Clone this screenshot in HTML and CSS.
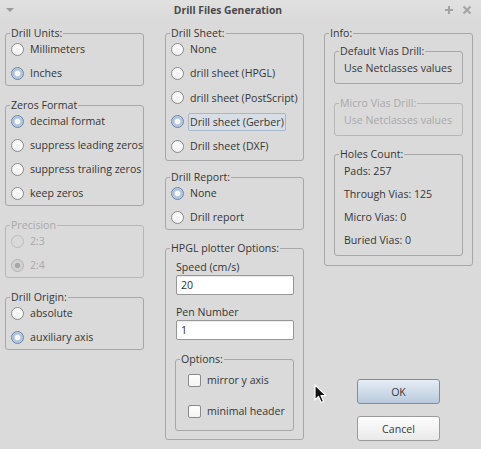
FILE: index.html
```html
<!DOCTYPE html>
<html>
<head>
<meta charset="utf-8">
<link rel="stylesheet" href="styles.css">
</head>
<body>
<div class="window">
  <div class="titlebar">
    <div class="tb-left">
      <svg width="8" height="5" viewBox="0 0 8 5"><polygon points="0,0 8,0 4,4" fill="#9a9a9a"/></svg>
    </div>
    <div class="title">Drill Files Generation</div>
    <div class="tb-right">
      <svg width="10" height="10" viewBox="0 0 10 10"><path d="M5 1v8M1 5h8" stroke="#a3a3a3" stroke-width="2"/></svg>
      <svg width="10" height="10" viewBox="0 0 10 10"><path d="M1.5 1.5l7 7M8.5 1.5l-7 7" stroke="#a3a3a3" stroke-width="2"/></svg>
    </div>
  </div>

  <div class="content">
    <div class="col col1">
      <fieldset class="box">
        <legend>Drill Units:</legend>
        <div class="rows">
          <div class="row"><span class="radio"></span>Millimeters</div>
          <div class="row"><span class="radio on"></span>Inches</div>
        </div>
      </fieldset>
      <fieldset class="box">
        <legend>Zeros Format</legend>
        <div class="rows">
          <div class="row"><span class="radio on"></span>decimal format</div>
          <div class="row"><span class="radio"></span>suppress leading zeros</div>
          <div class="row"><span class="radio"></span>suppress trailing zeros</div>
          <div class="row"><span class="radio"></span>keep zeros</div>
        </div>
      </fieldset>
      <fieldset class="box disabled">
        <legend>Precision</legend>
        <div class="rows">
          <div class="row"><span class="radio off"></span>2:3</div>
          <div class="row"><span class="radio off on"></span>2:4</div>
        </div>
      </fieldset>
      <fieldset class="box">
        <legend>Drill Origin:</legend>
        <div class="rows">
          <div class="row"><span class="radio"></span>absolute</div>
          <div class="row"><span class="radio on"></span>auxiliary axis</div>
        </div>
      </fieldset>
    </div>

    <div class="col col2">
      <fieldset class="box sheet">
        <legend>Drill Sheet:</legend>
        <div class="rows">
          <div class="row"><span class="radio"></span>None</div>
          <div class="row"><span class="radio"></span>drill sheet (HPGL)</div>
          <div class="row"><span class="radio"></span>drill sheet (PostScript)</div>
          <div class="row"><span class="radio on"></span><span class="focus">Drill sheet (Gerber)</span></div>
          <div class="row"><span class="radio"></span>Drill sheet (DXF)</div>
        </div>
      </fieldset>
      <fieldset class="box report">
        <legend>Drill Report:</legend>
        <div class="rows">
          <div class="row"><span class="radio on"></span>None</div>
          <div class="row"><span class="radio"></span>Drill report</div>
        </div>
      </fieldset>
      <fieldset class="box hpgl">
        <legend>HPGL plotter Options:</legend>
        <div class="flabel first">Speed (cm/s)</div>
        <div class="input">20</div>
        <div class="flabel">Pen Number</div>
        <div class="input">1</div>
        <fieldset class="box options">
          <legend>Options:</legend>
          <div class="checks">
            <div class="row"><span class="check"></span>mirror y axis</div>
            <div class="row"><span class="check"></span>minimal header</div>
          </div>
        </fieldset>
      </fieldset>
    </div>

    <div class="col col3">
      <fieldset class="box info">
        <legend>Info:</legend>
        <fieldset class="box sub first">
          <legend>Default Vias Drill:</legend>
          <div class="row single">Use Netclasses values</div>
        </fieldset>
        <fieldset class="box sub disabled">
          <legend>Micro Vias Drill:</legend>
          <div class="row single">Use Netclasses values</div>
        </fieldset>
        <fieldset class="box sub holes">
          <legend>Holes Count:</legend>
          <div class="hrows">
            <div class="row">Pads: 257</div>
            <div class="row">Through Vias: 125</div>
            <div class="row">Micro Vias: 0</div>
            <div class="row">Buried Vias: 0</div>
          </div>
        </fieldset>
      </fieldset>
      <div class="buttons">
        <div class="btn ok">OK</div>
        <div class="btn">Cancel</div>
      </div>
    </div>
  </div>

  <svg class="cursor" width="14" height="20" viewBox="0 0 14 20">
    <path d="M1 1 L1 16 L4.5 12.5 L7.2 18.5 L9.6 17.4 L7 11.6 L12 11.6 Z" fill="#111" stroke="#fff" stroke-width="1.2" stroke-linejoin="round"/>
  </svg>
</div>
</body>
</html>
```

FILE: styles.css
```css
* { box-sizing: border-box; }

body {
  margin: 0;
  background: #dadada;
  font-family: "Open Sans", "DejaVu Sans", sans-serif;
  font-size: 10.6px;
  color: #363636;
}

.window {
  position: relative;
  width: 481px;
  height: 449px;
  overflow: hidden;
  background: #dadada;
}

/* title bar */
.titlebar {
  height: 20px;
  display: flex;
  align-items: center;
  background: linear-gradient(#e1e1e1, #dadada);
}
.tb-left {
  width: 20px;
  padding-left: 6px;
  display: flex;
  align-items: center;
}
.title {
  flex: 1;
  text-align: center;
  font-weight: bold;
  font-size: 10.3px;
  color: #4a4a4a;
  line-height: 14px;
}
.tb-right {
  width: 45px;
  display: flex;
  gap: 8px;
  align-items: center;
  padding-left: 8px;
}

/* columns */
.content {
  display: flex;
  padding: 6px 0 0 5px;
}
.col { display: flex; flex-direction: column; }
.col1 { width: 139px; }
.col2 { width: 139px; margin-left: 21px; }
.col3 { width: 149px; margin-left: 20px; }

/* frames */
fieldset.box {
  margin: 0;
  min-width: 0;
  padding: 0 4px 4px 5px;
  border: 1px solid #a7a7a7;
  border-radius: 3px;
}
fieldset.box legend {
  padding: 0 1px;
  margin-left: -1px;
  height: 15px;
  line-height: 15px;
}
.col1 > .box + .box { margin-top: 12px; }

.rows { display: flex; flex-direction: column; gap: 8px; }
.row {
  height: 16px;
  display: flex;
  align-items: center;
  gap: 6px;
  white-space: nowrap;
}

fieldset.box.sheet { padding-bottom: 6px; }
fieldset.box.sheet .rows { gap: 8.25px; }
fieldset.box.report { margin-top: 9px; }
fieldset.box.hpgl {
  margin-top: 11px;
  padding: 0 9px 8px 10px;
}
fieldset.box.hpgl > legend { margin-left: -6px; }

fieldset.box.disabled { color: #a9a9a9; border-color: #b7b7b7; }

/* radio buttons */
.radio {
  width: 13px;
  height: 13px;
  border-radius: 50%;
  border: 1px solid #8a8a8a;
  background: linear-gradient(#ffffff, #f1f1f1);
  flex: none;
}
.radio.on {
  border-color: #6c84a3;
  background: radial-gradient(circle at 50% 50%, #ffffff 0, #ffffff 2.2px, #c4d4e8 3px, #a7bfdc 4.5px, #d3e0ee 6px);
}
.radio.off {
  border-color: #bcbcbc;
  background: #d9d9d9;
}
.radio.off.on {
  border-color: #b2b2b2;
  background: radial-gradient(circle at 50% 50%, #a6a6a6 0, #a6a6a6 2.2px, #cfcfcf 3px, #d6d6d6 6px);
}

.focus {
  padding: 0 1px;
  margin: 0 -2px;
  height: 18px;
  line-height: 16px;
  border: 1px solid #a8b8ca;
  border-radius: 2px;
  background: #d8dee6;
}

/* hpgl fields */
.flabel {
  height: 16px;
  line-height: 16px;
  margin-top: 9px;
}
.flabel.first { margin-top: 3px; }
.input {
  height: 20px;
  background: #ffffff;
  border: 1px solid #979797;
  border-radius: 2px;
  box-shadow: inset 0 1px 1px rgba(0,0,0,0.08);
  padding-left: 4px;
  line-height: 18px;
  color: #2e2e2e;
}
fieldset.box.options {
  margin-top: 12px;
  margin-left: -1px;
  padding: 0 4px 11px 12px;
}
fieldset.box.options > legend { margin-left: -8px; }
.checks { display: flex; flex-direction: column; gap: 15px; margin-top: 5px; }
.check {
  width: 13px;
  height: 13px;
  border: 1px solid #8a8a8a;
  border-radius: 2px;
  background: linear-gradient(#ffffff, #f3f3f3);
  flex: none;
}

/* info */
fieldset.box.info { padding: 0 9px 9px 9px; }
fieldset.box.info legend { margin-left: -5px; }
fieldset.box.sub { padding: 0 4px 7px 9px; margin-top: 12px; }
fieldset.box.sub.first { margin-top: 3px; }
fieldset.box.sub.holes { margin-top: 11px; }
.single { margin-top: 1px; }
.hrows { display: flex; flex-direction: column; gap: 7px; margin-top: 1px; }

/* buttons */
.buttons {
  margin-top: 113px;
  display: flex;
  flex-direction: column;
  align-items: center;
  gap: 12px;
}
.btn {
  width: 83px;
  height: 25px;
  border: 1px solid #9b9b9b;
  border-radius: 3px;
  background: linear-gradient(#fefefe, #e9e9e9);
  display: flex;
  align-items: center;
  justify-content: center;
  color: #3a3a3a;
}
.btn.ok {
  border-color: #7d8ea3;
  background: linear-gradient(#e6edf5, #b9cadd);
}

.cursor {
  position: absolute;
  left: 314px;
  top: 384px;
}
```
